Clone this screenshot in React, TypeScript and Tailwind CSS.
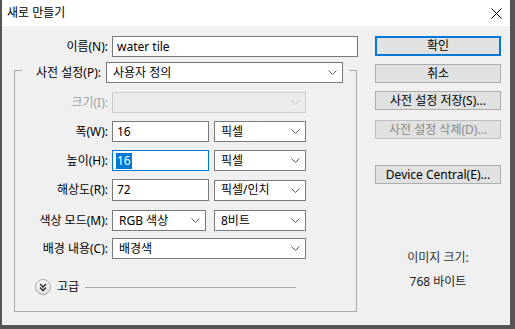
import React from 'react';

function Chevron({ color = '#5c5c5c' }: { color?: string }) {
  return (
    <svg width="9" height="5" viewBox="0 0 9 5" fill="none">
      <path d="M0.5 0.5L4.5 4.5L8.5 0.5" stroke={color} strokeWidth="1" />
    </svg>
  );
}

function Dropdown({ value, className }: { value: string; className: string }) {
  return (
    <div className={`flex h-[21px] items-center justify-between border border-[#7a7a7a] bg-white pl-[6px] pr-[5px] ${className}`}>
      <span>{value}</span>
      <Chevron />
    </div>
  );
}

function Field({ label, children, className = '' }: { label: string; children: React.ReactNode; className?: string }) {
  return (
    <div className={`flex items-center ${className}`}>
      <span className="w-[93px] text-right">{label}</span>
      {children}
    </div>
  );
}

function Button({ children, className = '' }: { children: React.ReactNode; className?: string }) {
  return (
    <div className={`flex h-[19px] items-center justify-center border border-[#adadad] bg-[#e1e1e1] ${className}`}>
      {children}
    </div>
  );
}

export default function App() {
  return (
    <div className="flex h-[329px] w-[515px] flex-col bg-[#555555] pb-[4px] pl-[2px] pr-[5px] font-['Noto_Sans','Noto_Sans_CJK_KR',sans-serif] text-[12px] leading-[16px] text-black">
      {/* title bar */}
      <div className="flex h-[26px] items-center justify-between bg-white pl-[5px] pr-[8px]">
        <span>새로 만들기</span>
        <svg width="11" height="11" viewBox="0 0 11 11">
          <path d="M0.5 0.5L10.5 10.5M10.5 0.5L0.5 10.5" stroke="#000" strokeWidth="1" />
        </svg>
      </div>

      {/* body */}
      <div className="flex flex-1 bg-[#f0f0f0] pl-[12px] pt-[10px]">
        {/* left column */}
        <div className="flex w-[344px] flex-col">
          <div className="flex items-center">
            <span className="w-[94px] text-right">이름(N):</span>
            <div className="ml-[4px] flex h-[21px] w-[246px] items-center border border-[#7a7a7a] bg-white pl-[4px]">
              water tile
            </div>
          </div>

          <fieldset className="w-[343px] border border-[#a9a9a9] pb-[16px]">
            <legend className="ml-[7px] flex items-center pr-[6px] pt-[5px]">
              <span className="w-[79px] text-right">사전 설정(P):</span>
              <Dropdown value="사용자 정의" className="ml-[5px] w-[237px]" />
            </legend>

            <Field label="크기(I):" className="mt-[9px] text-[#a0a0a0]">
              <div className="ml-[4px] flex h-[21px] w-[194px] items-center justify-end border border-[#cccccc] bg-[#ececec] pr-[5px]">
                <Chevron color="#c4c4c4" />
              </div>
            </Field>

            <Field label="폭(W):" className="mt-[8px]">
              <div className="ml-[4px] flex h-[21px] w-[97px] items-center border border-[#7a7a7a] bg-white pl-[4px]">16</div>
              <Dropdown value="픽셀" className="ml-[5px] w-[92px]" />
            </Field>

            <Field label="높이(H):" className="mt-[8px]">
              <div className="ml-[4px] flex h-[21px] w-[97px] items-center border border-[#0078d7] bg-white pl-[3px]">
                <span className="bg-[#0078d7] px-[1px] text-white">16</span>
              </div>
              <Dropdown value="픽셀" className="ml-[5px] w-[92px]" />
            </Field>

            <Field label="해상도(R):" className="mt-[8px]">
              <div className="ml-[4px] flex h-[22px] w-[97px] items-center border border-[#7a7a7a] bg-white pl-[4px]">72</div>
              <Dropdown value="픽셀/인치" className="ml-[5px] w-[92px]" />
            </Field>

            <Field label="색상 모드(M):" className="mt-[9px]">
              <Dropdown value="RGB 색상" className="ml-[4px] w-[94px]" />
              <Dropdown value="8비트" className="ml-[8px] w-[92px]" />
            </Field>

            <Field label="배경 내용(C):" className="mt-[7px]">
              <Dropdown value="배경색" className="ml-[4px] w-[194px]" />
            </Field>

            <div className="ml-[20px] mt-[20px] flex items-center">
              <svg width="16" height="16" viewBox="0 0 16 16">
                <defs>
                  <linearGradient id="adv" x1="0" y1="0" x2="0" y2="1">
                    <stop offset="0" stopColor="#ffffff" />
                    <stop offset="1" stopColor="#dcdcdc" />
                  </linearGradient>
                </defs>
                <circle cx="8" cy="8" r="7.5" fill="url(#adv)" stroke="#a8a8a8" />
                <path d="M5 5L8 8L11 5M5 8.5L8 11.5L11 8.5" stroke="#222" strokeWidth="1.3" fill="none" />
              </svg>
              <span className="ml-[6px]">고급</span>
              <div className="ml-[6px] mr-[60px] h-px flex-1 bg-[#a9a9a9]" />
            </div>
          </fieldset>
        </div>

        {/* right column */}
        <div className="ml-[17px] flex w-[126px] flex-col">
          <div className="flex h-[20px] items-center justify-center border-2 border-[#0078d7] bg-[#e1e1e1]">확인</div>
          <Button className="mt-[8px]">취소</Button>
          <Button className="mt-[8px]">사전 설정 저장(S)...</Button>
          <Button className="mt-[10px] border-[#bfbfbf] bg-[#cccccc] text-[#8a8a8a]">사전 설정 삭제(D)...</Button>
          <Button className="mt-[26px]">Device Central(E)...</Button>
          <div className="mt-[66px] text-center text-[#333333]">이미지 크기:</div>
          <div className="mt-[8px] text-center text-[#222222]">768 바이트</div>
        </div>
      </div>
    </div>
  );
}
